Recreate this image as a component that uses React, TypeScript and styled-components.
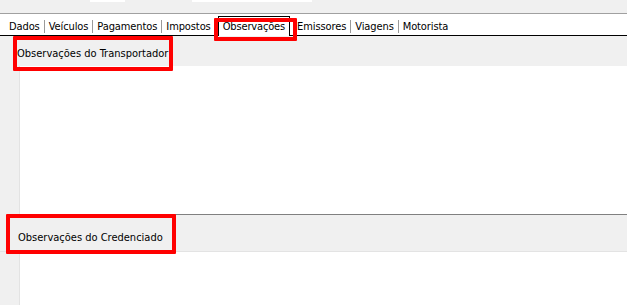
import React from "react";
import styled, { createGlobalStyle } from "styled-components";

const Global = createGlobalStyle`
  html, body { margin: 0; padding: 0; background: #f0f0f0; }
  body { font-family: "DejaVu Sans Condensed", "Liberation Sans", sans-serif; font-size: 11px; color: #000; }
  * { box-sizing: border-box; }
`;

const Page = styled.div`
  display: flex;
  flex-direction: column;
  height: 305px;
  width: 627px;
  overflow: hidden;
  background: #f0f0f0;
`;

const TopStrip = styled.div`
  display: flex;
  height: 14px;
  border-bottom: 1px solid #a0a0a0;
  flex-shrink: 0;
`;

const CutField = styled.div<{ $left: number; $width: number }>`
  margin-left: ${(p) => p.$left}px;
  width: ${(p) => p.$width}px;
  height: 2px;
  background: #fff;
`;

const TabBar = styled.div`
  display: flex;
  align-items: stretch;
  height: 22px;
  padding-left: 5px;
  background: #fff;
  border-bottom: 1px solid #000;
  flex-shrink: 0;
`;

const Tab = styled.div`
  display: flex;
  align-items: flex-start;
  padding: 6px 4px 0 4px;
  line-height: 14px;
  letter-spacing: -0.1px;
  white-space: nowrap;
`;

const Sep = styled.div`
  width: 1px;
  height: 13px;
  align-self: flex-start;
  margin-top: 6px;
  background: #9a9a9a;
`;

const ActiveTab = styled.div`
  position: relative;
  display: flex;
  align-items: flex-start;
  margin: 2px 3px -1px 3px;
  padding: 3px 4px 0 4px;
  border: 1px solid #000;
  border-bottom: none;
  background: #fff;
  line-height: 14px;
  letter-spacing: -0.15px;
  white-space: nowrap;
`;

const Highlight = styled.div<{ $l: number; $t: number; $w: number; $h: number }>`
  position: absolute;
  left: ${(p) => p.$l}px;
  top: ${(p) => p.$t}px;
  width: ${(p) => p.$w}px;
  height: ${(p) => p.$h}px;
  border: 4px solid #ff0000;
  border-radius: 1px;
  z-index: 5;
  pointer-events: none;
`;

const Header = styled.div<{ $h: number; $pt: number; $pl: number; $line?: boolean }>`
  position: relative;
  height: ${(p) => p.$h}px;
  padding: ${(p) => p.$pt}px 0 0 ${(p) => p.$pl}px;
  line-height: 14px;
  background: #f0f0f0;
  flex-shrink: 0;
  ${(p) => (p.$line ? "border-bottom: 1px solid #e3e3e3;" : "")}
`;

const Memo = styled.div<{ $h?: number; $bottomRule?: boolean }>`
  margin-left: 19px;
  background: #fff;
  border-left: 1px solid #e3e3e3;
  ${(p) => (p.$h ? `height: ${p.$h}px; flex-shrink: 0;` : "flex: 1;")}
  ${(p) => (p.$bottomRule ? "border-bottom: 1px solid #808080;" : "")}
`;

const tabs = ["Dados", "Veículos", "Pagamentos", "Impostos"];
const tabsAfter = ["Emissores", "Viagens", "Motorista"];

export default function App() {
  return (
    <>
      <Global />
      <Page>
        <TopStrip>
          <CutField $left={90} $width={35} />
          <CutField $left={67} $width={120} />
        </TopStrip>
        <TabBar>
          {tabs.map((t, i) => (
            <React.Fragment key={t}>
              {i > 0 && <Sep />}
              <Tab>{t}</Tab>
            </React.Fragment>
          ))}
          <ActiveTab>
            Observações
            <Highlight $l={-5} $t={1} $w={83} $h={23} />
          </ActiveTab>
          {tabsAfter.map((t, i) => (
            <React.Fragment key={t}>
              {i > 0 && <Sep />}
              <Tab>{t}</Tab>
            </React.Fragment>
          ))}
        </TabBar>
        <Header $h={30} $pt={11} $pl={17}>
          Observações do Transportador
          <Highlight $l={13} $t={0} $w={160} $h={35} />
        </Header>
        <Memo $h={149} $bottomRule />
        <Header $h={37} $pt={16} $pl={18} $line>
          Observações do Credenciado
          <Highlight $l={6} $t={-1} $w={170} $h={40} />
        </Header>
        <Memo />
      </Page>
    </>
  );
}
